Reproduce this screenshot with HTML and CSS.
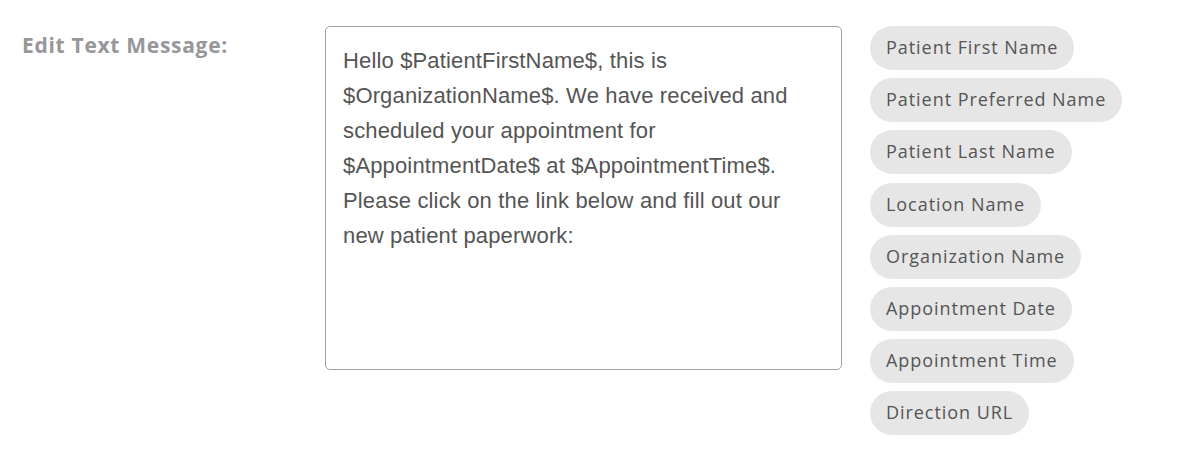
FILE: index.html
```html
<!DOCTYPE html>
<html>
<head>
<meta charset="utf-8">
<link rel="stylesheet" href="styles.css">
</head>
<body>
<div class="row">
  <div class="label">Edit Text Message:</div>
  <div class="editor">Hello $PatientFirstName$, this is $OrganizationName$. We have received and scheduled your appointment for $AppointmentDate$ at $AppointmentTime$. Please click on the link below and fill out our new patient paperwork:</div>
  <div class="chips">
    <span class="chip">Patient First Name</span>
    <span class="chip">Patient Preferred Name</span>
    <span class="chip">Patient Last Name</span>
    <span class="chip">Location Name</span>
    <span class="chip">Organization Name</span>
    <span class="chip">Appointment Date</span>
    <span class="chip">Appointment Time</span>
    <span class="chip">Direction URL</span>
  </div>
</div>
</body>
</html>
```
FILE: styles.css
```css
html, body {
  margin: 0;
  padding: 0;
  background: #fff;
}
.row {
  display: flex;
  align-items: flex-start;
  padding: 26px 0 0 22px;
}
.label {
  width: 303px;
  padding-top: 7px;
  font-family: "Open Sans", "Liberation Sans", sans-serif;
  font-weight: 700;
  font-size: 21px;
  line-height: 24px;
  color: #97979b;
  letter-spacing: 0.7px;
}
.editor {
  box-sizing: border-box;
  width: 517px;
  height: 344px;
  border: 1px solid #a2a2a2;
  border-radius: 5px;
  padding: 16px 17px;
  font-family: "Liberation Sans", Arial, sans-serif;
  font-size: 22px;
  line-height: 35px;
  letter-spacing: 0.15px;
  color: #555;
}
.chips {
  display: flex;
  flex-direction: column;
  align-items: flex-start;
  gap: 8.2px;
  margin-left: 28px;
}
.chip {
  display: inline-block;
  height: 44px;
  box-sizing: border-box;
  line-height: 42px;
  padding: 0 16px 2px;
  border-radius: 22px;
  background: #e6e6e6;
  color: #555;
  font-family: "Open Sans", "Liberation Sans", sans-serif;
  font-size: 18px;
  letter-spacing: 0.95px;
}
```
